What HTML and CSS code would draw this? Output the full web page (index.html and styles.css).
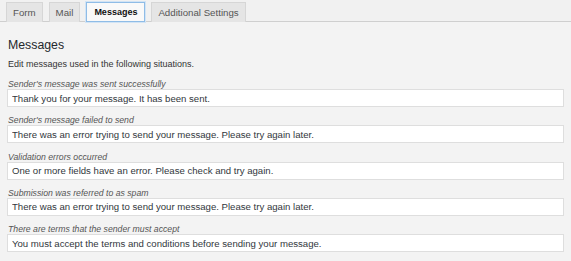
FILE: index.html
```html
<!doctype html>
<html>
	<head>
		<link rel="stylesheet" href="styles.css">
	</head>
	<body>
		<div class="tabs">
			<span class="tab">Form</span>
			<span class="tab">Mail</span>
			<span class="tab active">Messages</span>
			<span class="tab">Additional Settings</span>
		</div>

		<div class="panel">
			<h2 class="title">Messages</h2>
			<p class="intro">Edit messages used in the following situations.</p>

			<div class="field">
				<label>Sender's message was sent successfully</label>
				<input class="msg-text" type="text" value="Thank you for your message. It has been sent.">
			</div>
			<div class="field">
				<label>Sender's message failed to send</label>
				<input class="msg-text" type="text" value="There was an error trying to send your message. Please try again later.">
			</div>
			<div class="field">
				<label>Validation errors occurred</label>
				<input class="msg-text" type="text" value="One or more fields have an error. Please check and try again.">
			</div>
			<div class="field">
				<label>Submission was referred to as spam</label>
				<input class="msg-text" type="text" value="There was an error trying to send your message. Please try again later.">
			</div>
			<div class="field">
				<label>There are terms that the sender must accept</label>
				<input class="msg-text" type="text" value="You must accept the terms and conditions before sending your message.">
			</div>
		</div>
	</body>
</html>
```

FILE: styles.css
```css
body {
	margin: 0;
	background: #f1f1f1;
	font-family: "Liberation Sans", Arial, sans-serif;
	color: #32373c;
}

.tabs {
	display: flex;
	gap: 6px;
	padding: 2px 0 0 6px;
	height: 19px;
	border-bottom: 1px solid #cfcfcf;
}

.tab {
	display: flex;
	align-items: center;
	padding: 0 6px;
	font-size: 9.7px;
	color: #555;
	background: #e5e5e5;
	border: 1px solid #d6d6d6;
	border-bottom: none;
	margin-bottom: -1px;
}

.tab.active {
	background: #f9f9f9;
	color: #111;
	font-weight: bold;
	font-size: 9px;
	padding: 0 7px;
	border: 1px solid #8fbce6;
	box-shadow: 0 0 0 1px #d2e4f5;
	position: relative;
}

.panel {
	background: #f3f3f3;
	padding: 16px 7px 0 7px;
	height: 239px;
	box-sizing: border-box;
}

.title {
	font-size: 12.3px;
	line-height: 15px;
	font-weight: normal;
	margin: 0 0 0 1px;
	color: #23282d;
}

.intro {
	font-size: 9px;
	line-height: 12px;
	margin: 5px 0 8px 1px;
	color: #333;
}

.field {
	display: flex;
	flex-direction: column;
	margin-bottom: 7.25px;
}

.field label {
	font-size: 8.7px;
	font-style: italic;
	color: #555;
	margin: 1px 0 0 1px;
	height: 11px;
	line-height: 11px;
}

.msg-text {
	width: 557px;
	height: 18px;
	box-sizing: border-box;
	border: 1px solid #dedede;
	background: #fff;
	padding: 0 4px;
	font-family: "Liberation Sans", Arial, sans-serif;
	font-size: 9.6px;
	color: #32373c;
	margin: -1px 0 0 0;
}
```
